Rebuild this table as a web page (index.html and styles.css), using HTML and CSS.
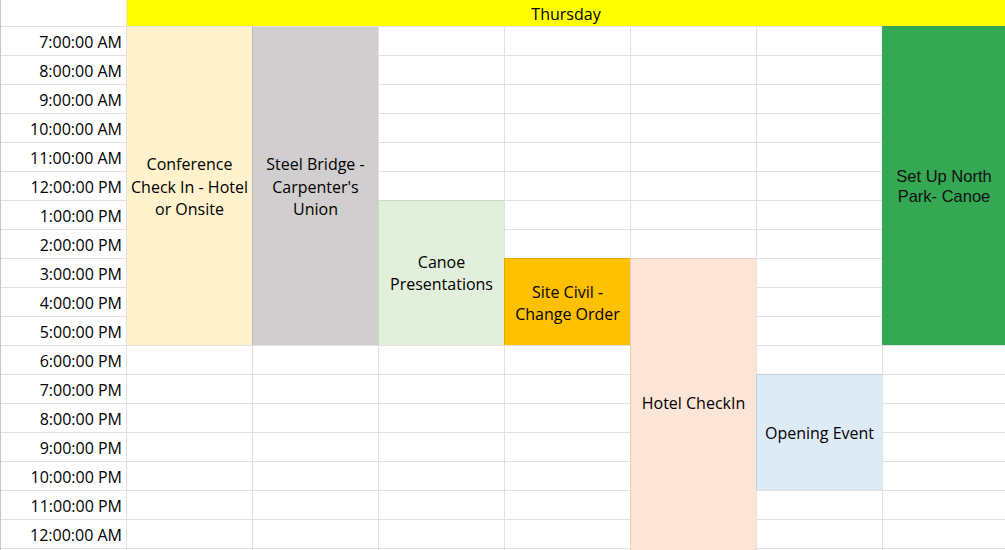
FILE: index.html
```html
<!DOCTYPE html>
<html>
<head>
<meta charset="utf-8">
<title>Thursday schedule</title>
<link rel="stylesheet" href="styles.css">
</head>
<body>
<div class="sheet">
  <div class="corner"></div>
  <div class="day">Thursday</div>
  <div class="time">7:00:00 AM</div>
  <div class="time">8:00:00 AM</div>
  <div class="time">9:00:00 AM</div>
  <div class="time">10:00:00 AM</div>
  <div class="time">11:00:00 AM</div>
  <div class="time">12:00:00 PM</div>
  <div class="time">1:00:00 PM</div>
  <div class="time">2:00:00 PM</div>
  <div class="time">3:00:00 PM</div>
  <div class="time">4:00:00 PM</div>
  <div class="time">5:00:00 PM</div>
  <div class="time">6:00:00 PM</div>
  <div class="time">7:00:00 PM</div>
  <div class="time">8:00:00 PM</div>
  <div class="time">9:00:00 PM</div>
  <div class="time">10:00:00 PM</div>
  <div class="time">11:00:00 PM</div>
  <div class="time">12:00:00 AM</div>

  <div class="event ev-conf">Conference Check In - Hotel or Onsite</div>
  <div class="event ev-steel">Steel Bridge - Carpenter's Union</div>
  <div class="event ev-canoe">Canoe Presentations</div>
  <div class="event ev-civil">Site Civil - Change Order</div>
  <div class="event ev-hotel">Hotel CheckIn</div>
  <div class="event ev-open">Opening Event</div>
  <div class="event ev-north">Set Up North Park- Canoe</div>
</div>
</body>
</html>
```

FILE: styles.css
```css
* { box-sizing: border-box; }

html, body {
  margin: 0;
  padding: 0;
  background: #ffffff;
}

.sheet {
  width: 1005px;
  height: 550px;
  overflow: hidden;
  display: grid;
  grid-template-columns: repeat(7, 126px) 1fr;
  grid-template-rows: 26px repeat(18, 29px) 1fr;
  font-family: "Open Sans", "Liberation Sans", sans-serif;
  font-size: 16px;
  color: #000;
  background-color: #fff;
  background-image:
    linear-gradient(to right, #c6c6c6 0 1px, transparent 1px),
    linear-gradient(to right, #e1e1e1 0 1px, transparent 1px),
    linear-gradient(to bottom, #e1e1e1 0 1px, transparent 1px);
  background-size: 100% 100%, 126px 100%, 100% 29px;
  background-position: 0 0, 0 0, 0 26px;
  background-repeat: no-repeat, repeat-x, repeat-y;
}

.corner {
  grid-column: 1;
}

.day {
  grid-row: 1;
  grid-column: 2 / -1;
  background: #ffff00;
  border-left: 1px solid #e1e1e1;
  display: flex;
  align-items: center;
  justify-content: center;
  line-height: 22px;
  padding-top: 1px;
}

.time {
  grid-column: 1;
  display: flex;
  align-items: flex-end;
  justify-content: flex-end;
  padding: 0 4px 2px 0;
  line-height: 22px;
  white-space: nowrap;
}

.event {
  display: flex;
  align-items: center;
  justify-content: center;
  text-align: center;
  line-height: 22.5px;
  padding: 0 2px;
  border-left: 1px solid transparent;
  border-top: 1px solid transparent;
}

.ev-conf {
  grid-column: 2;
  grid-row: 2 / 13;
  background: #fff2cc;
  border-color: #e1e1e1;
  padding-top: 2px;
}

.ev-steel {
  grid-column: 3;
  grid-row: 2 / 13;
  background: #d0cece;
  border-color: #bdbdbd;
  border-top-color: #e1e1e1;
  padding-top: 2px;
}

.ev-canoe {
  grid-column: 4;
  grid-row: 8 / 13;
  background: #e2efda;
  border-color: #c8dbbd;
}

.ev-civil {
  grid-column: 5;
  grid-row: 10 / 13;
  background: #ffc000;
  border-color: #e3ad00;
  padding-top: 2px;
}

.ev-hotel {
  grid-column: 6;
  grid-row: 10 / -1;
  background: #fce4d6;
  border-color: #e6cbbb;
  padding-bottom: 3px;
}

.ev-open {
  grid-column: 7;
  grid-row: 14 / 18;
  background: #ddebf7;
  border-color: #bed2e4;
  padding-top: 2px;
}

.ev-north {
  grid-column: 8;
  grid-row: 2 / 13;
  background: #34a853;
  border-color: #34a853;
  font-family: "Liberation Sans", Arial, sans-serif;
  font-size: 16.5px;
  line-height: 20px;
  color: #111;
  padding: 0 8px;
}
```
